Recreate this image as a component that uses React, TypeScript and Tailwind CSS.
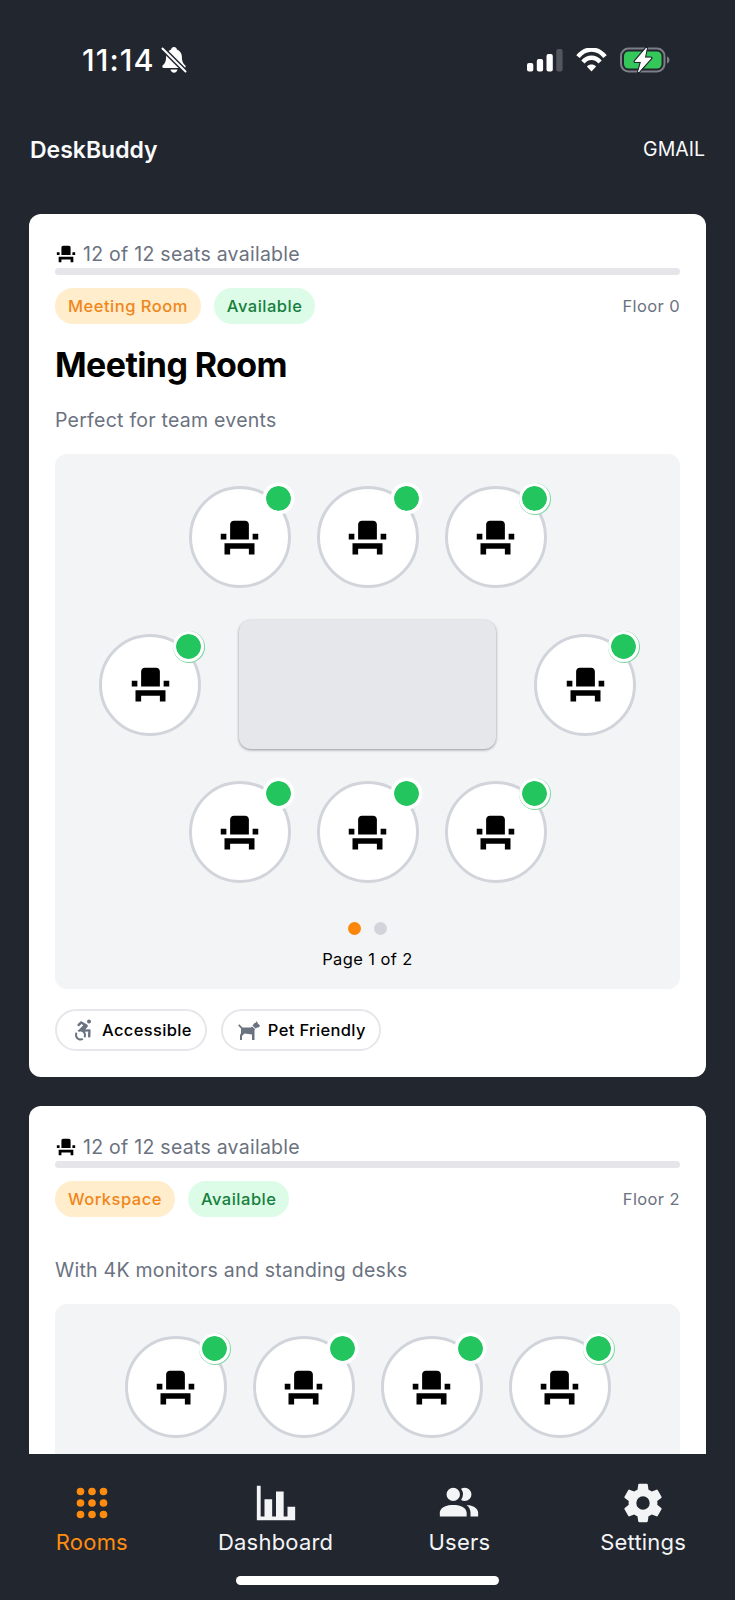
import React from "react";
import { MdEventSeat } from "react-icons/md";

function Chair({ size }: { size: number }) {
  return <MdEventSeat size={size} className="shrink-0 text-black" />;
}

function Seat({ ring }: { ring?: boolean }) {
  return (
    <div className="relative flex size-[102px] shrink-0 items-center justify-center rounded-full border-[3px] border-[#d1d5db] bg-white">
      <Chair size={45} />
      <span
        className={
          "absolute -top-[6px] -right-[6px] size-[31px] rounded-full border-[3px] border-white bg-[#22c55e] bg-clip-padding " +
          (ring ? "shadow-[0.5px_0.5px_0_0.5px_#7fd6a0]" : "shadow-[0_0_0_0.5px_#ffffff]")
        }
      />
    </div>
  );
}

function CardTop({ type, floor }: { type: string; floor: string }) {
  return (
    <>
      <div className="flex h-[29px] items-center gap-[6px]">
        <Chair size={22} />
        <span className="pt-[2px] text-[19.5px] leading-[29px] tracking-[0.26px] text-[#6b7280]">12 of 12 seats available</span>
      </div>
      <div className="h-[7px] rounded-full bg-[#e5e5ea]" />
      <div className="mt-[13px] flex h-9 items-center gap-[13px]">
        <span className="flex h-9 items-center rounded-full bg-[#ffedcc] px-[13px] text-[16.5px] font-medium tracking-[0.5px] text-[#f0861a]">{type}</span>
        <span className="flex h-9 items-center rounded-full bg-[#dcfce7] px-[13px] text-[16.5px] font-medium tracking-[0.5px] text-[#15803d]">Available</span>
        <span className="ml-auto text-[16.5px] tracking-[0.4px] text-[#6b7280]">{floor}</span>
      </div>
    </>
  );
}

function Chip({ label, children }: { label: string; children: React.ReactNode }) {
  return (
    <div className="flex h-[42px] items-center rounded-full border-2 border-[#e5e7eb] pr-[13px] pl-[14px] text-[16.5px] font-medium tracking-[0.35px] text-black">
      <svg viewBox="0 0 24 24" className="mr-[7px] size-[24px] fill-[#6b7280]">{children}</svg>
      {label}
    </div>
  );
}

function Tab({ label, active, children }: { label: string; active?: boolean; children: React.ReactNode }) {
  return (
    <div className={"flex flex-1 flex-col items-center " + (active ? "text-[#ff8c0f]" : "text-[#f3f4f6]")}>
      <svg viewBox="0 0 24 24" className="size-[46px] fill-current">{children}</svg>
      <span className="text-[22px] leading-[32px] tracking-[0.2px]">{label}</span>
    </div>
  );
}

export default function App() {
  return (
    <div className="flex h-[1600px] w-[735px] flex-col overflow-hidden bg-[#22262f] font-['Inter',sans-serif]">
      <header className="h-[214px] shrink-0">
        <div className="flex h-[120px] items-center pr-[65px] pl-[82px]">
          <span className="text-[30.5px] font-medium tracking-[1.1px] text-white">11:14</span>
          <svg viewBox="0 0 26 28" className="ml-[6px] h-[28px] w-[26px]">
            <path d="M13 1c1.700 0 2.700 1 2.900 2.500 3.300 1.200 5 4 5 7.500 0 4.800 1.500 6.600 3.300 8.300.9.900.5 2.700-1 2.700H2.800c-1.500 0-1.900-1.800-1-2.700C3.600 17.600 5.100 15.800 5.100 11c0-3.500 1.700-6.300 5-7.500C10.300 2 11.300 1 13 1z" fill="#fff" />
            <path d="M9.500 23.500h7c-.3 1.900-1.700 3.200-3.500 3.200s-3.200-1.300-3.500-3.200z" fill="#fff" />
            <path d="M1 2l24 24" stroke="#22262f" strokeWidth="5" />
            <path d="M1.500 2.500l23 23" stroke="#fff" strokeWidth="2" strokeLinecap="round" />
          </svg>
          <div className="ml-auto flex items-center gap-[13px]">
            <svg viewBox="0 0 36 24" className="h-6 w-9">
              <rect x="0" y="15" width="6.300" height="8.500" rx="2" fill="#fff" />
              <rect x="9.800" y="11" width="6.300" height="12.500" rx="2" fill="#fff" />
              <rect x="19.500" y="6" width="6.300" height="17.500" rx="2" fill="#fff" />
              <rect x="29.300" y="1" width="6.300" height="22.500" rx="2" fill="#53565d" />
            </svg>
            <svg viewBox="0 0 30 24" className="h-6 w-[31px]" fill="none" stroke="#fff" strokeWidth="4.4">
              <path d="M1.500 8.700C9-.8 21-.8 28.500 8.700" />
              <path d="M6.400 13.900c5-5.500 12.200-5.500 17.200 0" />
              <path d="M15 23.500l-4.600-5c2.600-2.600 6.600-2.600 9.200 0z" fill="#fff" stroke="none" />
            </svg>
            <svg viewBox="0 0 50 26" className="h-[26px] w-[50px]">
              <rect x="1" y="1.500" width="43.500" height="23" rx="7.500" fill="none" stroke="#7c7f85" strokeWidth="2" />
              <rect x="4" y="4.500" width="37.500" height="17" rx="4.500" fill="#34c759" />
              <path d="M47 9.500c1.600.6 2.500 2 2.500 3.500s-.9 2.900-2.500 3.500z" fill="#7c7f85" />
              <path d="M26.500 1L15 14.500h6.500L18.500 25 31 11h-6.600z" fill="#fff" stroke="#22262f" strokeWidth="3" strokeLinejoin="round" paintOrder="stroke" />
              <path d="M26.500 1L15 14.500h6.500L18.500 25 31 11h-6.600z" fill="#fff" stroke="#fff" strokeWidth="0.8" strokeLinejoin="round" />
            </svg>
          </div>
        </div>
        <div className="flex h-[60px] items-center justify-between px-[30px] text-[#f9fafb]">
          <span className="text-[23px] font-semibold">DeskBuddy</span>
          <span className="text-[19.500px]">GMAIL</span>
        </div>
      </header>

      <main className="flex min-h-0 flex-1 flex-col gap-[29px] overflow-hidden px-[29px]">
        <section className="h-[863px] shrink-0 rounded-[12px] bg-white px-[26px] pt-[25px]">
          <CardTop type="Meeting Room" floor="Floor 0" />
          <h1 className="mt-[17px] text-[34px] leading-[48px] font-bold tracking-[-0.6px] text-black">Meeting Room</h1>
          <p className="mt-[17px] text-[19.500px] leading-[28px] tracking-[0.25px] text-[#6b7280]">Perfect for team events</p>
          <div className="mt-5 flex h-[535px] flex-col items-center rounded-[12px] bg-[#f3f4f6] pt-8">
            <div className="flex gap-[26px]"><Seat /><Seat /><Seat ring /></div>
            <div className="mt-8 flex w-[537px] items-center justify-between">
              <Seat ring />
              <div className="h-[129px] w-[257px] rounded-[12px] bg-[#e5e7eb] shadow-[0_1px_3px_rgba(0,0,0,0.4)]" />
              <Seat ring />
            </div>
            <div className="mt-8 flex gap-[26px]"><Seat /><Seat /><Seat ring /></div>
            <div className="mt-[39px] flex gap-[13px]">
              <span className="size-[13px] rounded-full bg-[#fb860b]" />
              <span className="size-[13px] rounded-full bg-[#d1d5db]" />
            </div>
            <span className="mt-[12px] text-[16.500px] leading-[24px] tracking-[0.400px] text-black">Page 1 of 2</span>
          </div>
          <div className="mt-5 flex gap-[14px]">
            <Chip label="Accessible">
              <path d="M18.400 11.200L14.300 11.400L16.600 8.800C16.800 8.500 16.900 8 16.800 7.500C16.700 7.200 16.600 6.900 16.300 6.700L10.900 3.500C10.500 3.200 9.900 3.300 9.500 3.600L6.800 6.100C6.300 6.600 6.200 7.300 6.700 7.800C7.100 8.300 7.900 8.300 8.400 7.900L10.400 6.100L12.300 7.200L8.100 11.500C8 11.600 8 11.700 7.900 11.700C7.400 11.900 6.900 12.100 6.500 12.400L8 13.900C8.500 13.700 9 13.500 9.500 13.500C11.400 13.500 13 15.100 13 17C13 17.600 12.900 18.100 12.600 18.500L14.100 20C14.700 19.100 15 18.100 15 17C15 15.800 14.600 14.600 13.900 13.700L17.200 13.400L17 18.200C16.900 18.900 17.400 19.400 18.100 19.500H18.200C18.800 19.500 19.300 19 19.400 18.400L19.600 12.500C19.600 12.200 19.500 11.800 19.300 11.600C19 11.300 18.700 11.200 18.400 11.200M18 5.500A2 2 0 1 0 18 1.500A2 2 0 0 0 18 5.500M12.500 21.600C11.600 22.200 10.600 22.500 9.500 22.500C6.500 22.500 4 20 4 17C4 15.900 4.300 14.900 4.900 14L6.400 15.500C6.100 16 6 16.500 6 17C6 18.900 7.600 20.500 9.500 20.500C10.100 20.500 10.600 20.400 11 20.100z" />
            </Chip>
            <Chip label="Pet Friendly">
              <path d="M2.300 6.200L1.200 7.500 4 10.500v4.300L3 17.500V22h2v-4l2.500-2.500L15 16.500V22h2.500V12.500L18 11l-3-2.500-1.200 1H5.500zM15.500 7.500L18 4.500l.8.600L19.800 3l1.200 2.800 2 1.600-1 1.800-2.300.5-1.200.9z" />
            </Chip>
          </div>
        </section>

        <section className="h-[863px] shrink-0 rounded-[12px] bg-white px-[26px] pt-[26px]">
          <CardTop type="Workspace" floor="Floor 2" />
          <p className="mt-[39px] text-[19.500px] leading-[28px] tracking-[0.25px] text-[#6b7280]">With 4K monitors and standing desks</p>
          <div className="mt-5 flex h-[535px] flex-col items-center rounded-[12px] bg-[#f3f4f6] pt-8">
            <div className="flex gap-[26px]"><Seat ring /><Seat /><Seat /><Seat ring /></div>
          </div>
        </section>
      </main>

      <nav className="h-[146px] shrink-0 bg-[#22262f] pt-[26px]">
        <div className="flex">
          <Tab label="Rooms" active>
            <path d="M12 16a2 2 0 1 1 0 4 2 2 0 0 1 0-4m0-6a2 2 0 1 1 0 4 2 2 0 0 1 0-4m0-6a2 2 0 1 1 0 4 2 2 0 0 1 0-4M6 16a2 2 0 1 1 0 4 2 2 0 0 1 0-4m0-6a2 2 0 1 1 0 4 2 2 0 0 1 0-4m0-6a2 2 0 1 1 0 4 2 2 0 0 1 0-4m12 12a2 2 0 1 1 0 4 2 2 0 0 1 0-4m0-6a2 2 0 1 1 0 4 2 2 0 0 1 0-4m0-6a2 2 0 1 1 0 4 2 2 0 0 1 0-4z" />
          </Tab>
          <Tab label="Dashboard">
            <path d="M22 21H2V3h2v16h2v-9h4v9h2V6h4v13h2v-5h4z" />
          </Tab>
          <Tab label="Users">
            <path d="M16 17v2H2v-2s0-4 7-4 7 4 7 4m-3.500-9.500A3.500 3.500 0 1 0 9 11a3.500 3.500 0 0 0 3.500-3.500m3.440 5.500A5.320 5.320 0 0 1 18 17v2h4v-2s0-3.630-6.060-4M15 4a3.390 3.390 0 0 0-1.930.59 5 5 0 0 1 0 5.820A3.390 3.390 0 0 0 15 11a3.500 3.500 0 0 0 0-7z" />
          </Tab>
          <Tab label="Settings">
            <path d="M12 15.500A3.500 3.500 0 0 1 8.500 12 3.500 3.500 0 0 1 12 8.500a3.500 3.500 0 0 1 3.500 3.500 3.500 3.500 0 0 1-3.500 3.500m7.430-2.530c.04-.32.07-.64.07-.97s-.03-.66-.07-1l2.110-1.630c.19-.15.24-.42.12-.64l-2-3.460c-.12-.22-.39-.31-.61-.22l-2.490 1c-.52-.39-1.060-.73-1.690-.98l-.37-2.650A.506.506 0 0 0 14 2h-4c-.25 0-.46.18-.5.420l-.37 2.650c-.63.25-1.170.59-1.690.98l-2.490-1c-.22-.09-.49 0-.61.22l-2 3.460c-.13.22-.07.49.12.64L4.570 11c-.04.340-.07.67-.07 1s.03.650.07.970l-2.110 1.660c-.19.15-.25.42-.12.64l2 3.460c.12.22.39.3.61.22l2.490-1.010c.52.400 1.060.740 1.690.990l.37 2.650c.04.240.25.420.5.420h4c.25 0 .46-.18.5-.42l.37-2.650c.63-.26 1.170-.59 1.690-.99l2.490 1.010c.22.08.49 0 .61-.22l2-3.460c.12-.22.07-.49-.12-.64z" />
          </Tab>
        </div>
        <div className="mx-auto mt-[18px] h-[9px] w-[263px] rounded-full bg-white" />
      </nav>
    </div>
  );
}
